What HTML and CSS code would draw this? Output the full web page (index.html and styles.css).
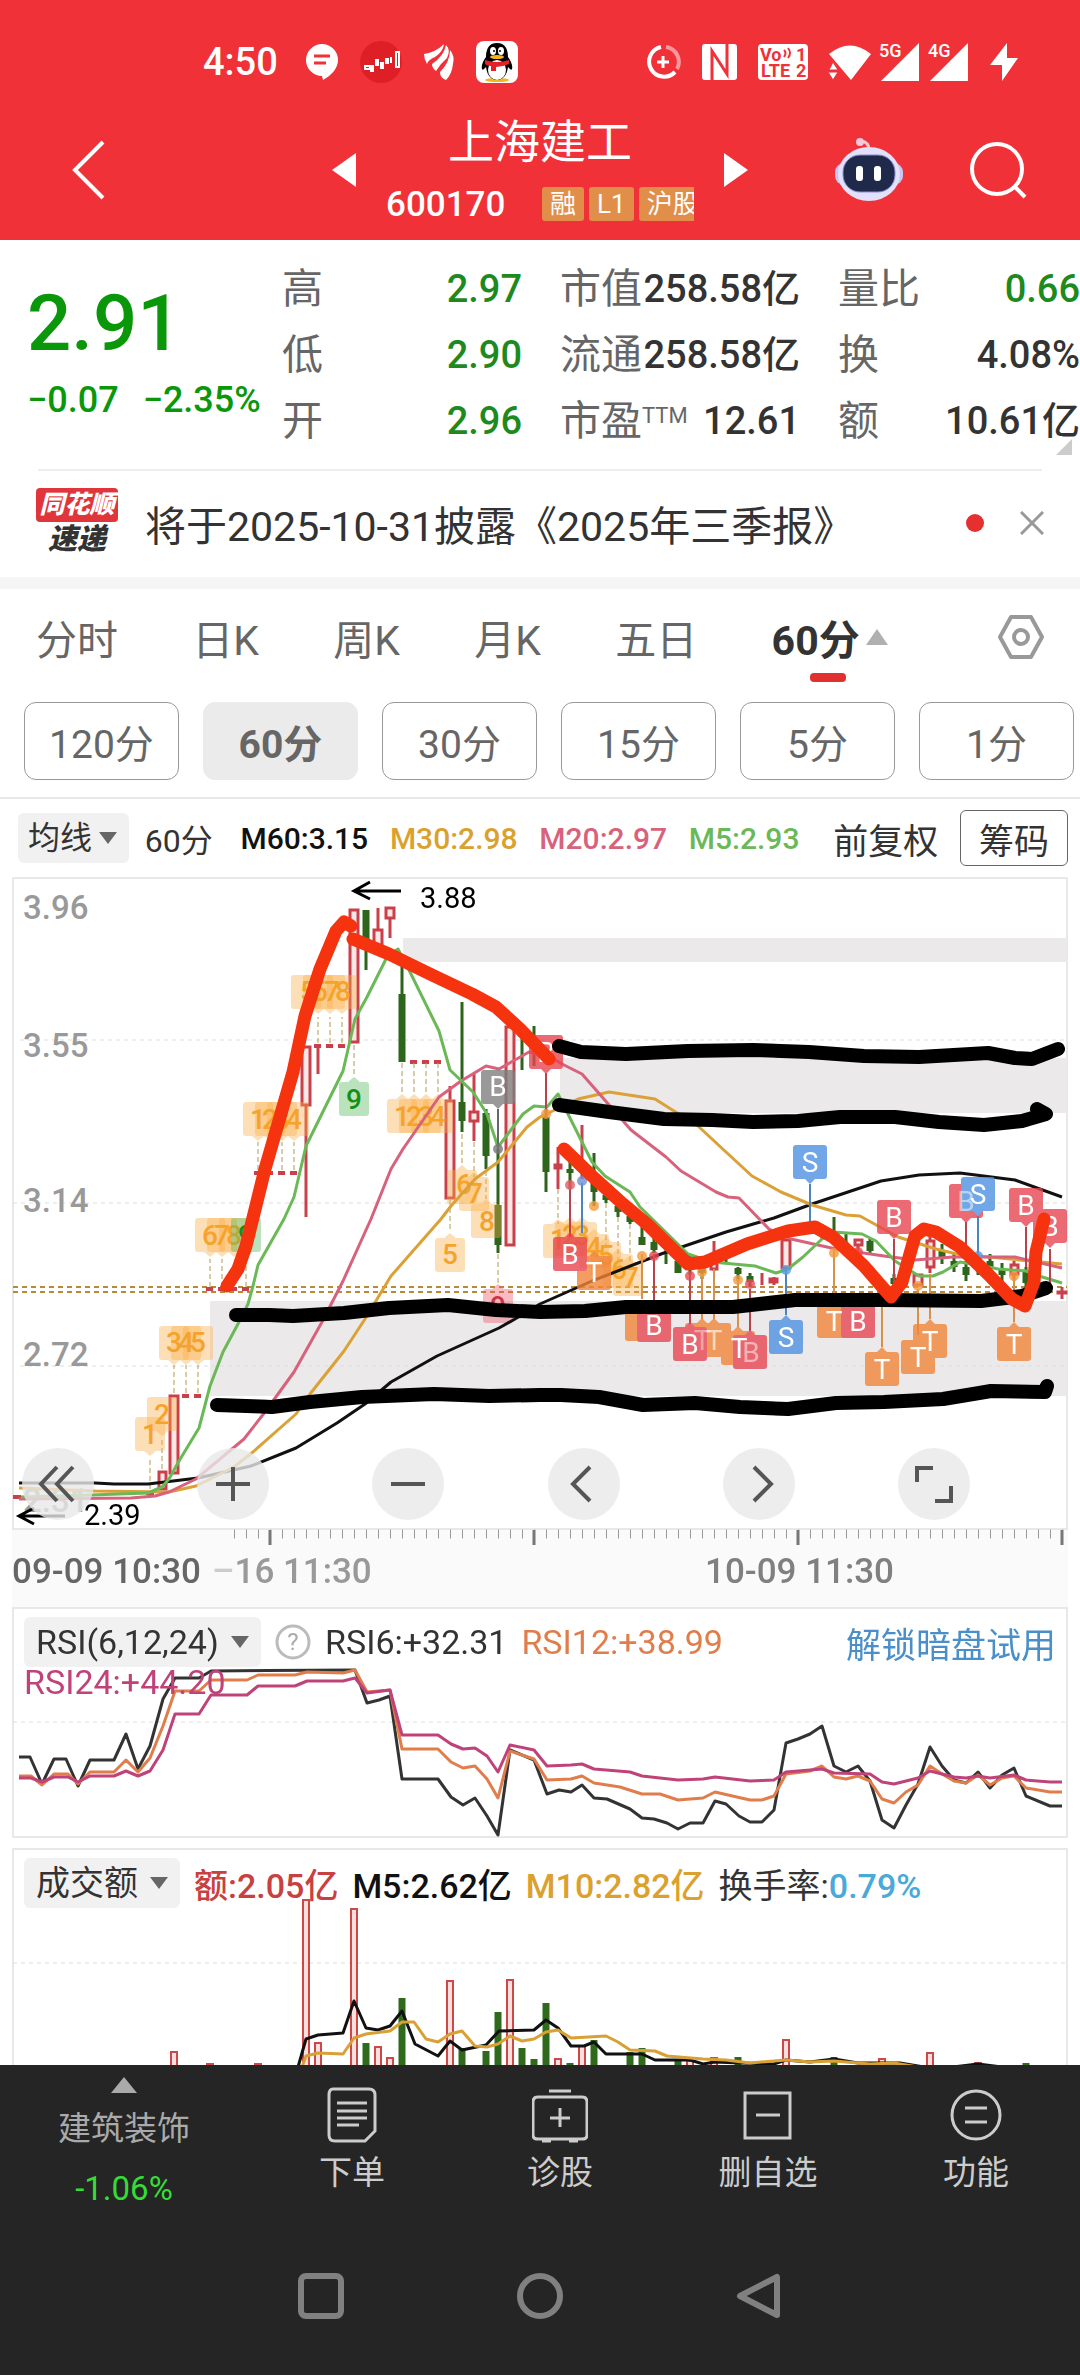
FILE: index.html
```
<!DOCTYPE html>
<html lang="zh-CN">

<head>
  <meta charset="UTF-8" />
  <meta name="viewport" content="width=device-width, initial-scale=1.0" />
  <title>上海建工 600170</title>
  <link rel="stylesheet" href="styles.css">
</head>

<body>
  <header class="top">
    <div class="status">
      <span class="clock">4:50</span>
      <svg width="32" height="36" viewBox="0 0 32 36"><path fill="#fff" d="M16 0a16 16 0 0 1 16 16c0 8-6 15-15 20l-1-4A16 16 0 0 1 16 0z"/><path stroke="#f03138" stroke-width="3" d="M8 12h16M8 19h12"/></svg>
      <svg width="42" height="42" viewBox="0 0 42 42"><circle cx="21" cy="21" r="21" fill="#de1f26"/><path fill="none" stroke="#fff" stroke-width="2" d="M5 28h5v-3h-5zM11 25h2v5h-2zM16 19h2v5h-2zM21 22h2v5h-2zM26 18h2v4h-2zM31 16v6M36 11h3v15h-3z"/></svg>
      <svg width="30" height="36" viewBox="0 0 30 36"><path fill="#fff" d="M0 10Q12 8 20 0 19 8 11 13 4 16 3 20 0 15 0 10zM8 20Q20 12 22 1 27 6 23 14 16 20 12 27 8 24 8 20zM16 28Q26 18 26 6 31 12 29 20 28 30 22 36 16 34 16 28z"/></svg>
      <svg width="42" height="42" viewBox="0 0 42 42"><rect width="42" height="42" rx="8" fill="#fff"/><ellipse cx="21" cy="39" rx="12" ry="2" fill="#f5b51b"/><path d="M21 2c-8 0-11 6-11 14-3 4-5 9-4 12 1 2 3-1 4-2 1 8 5 13 11 13s10-5 11-13c1 1 3 4 4 2 1-3-1-8-4-12C32 8 29 2 21 2z"/><ellipse cx="21" cy="29" rx="9" ry="10" fill="#fff"/><ellipse cx="17" cy="10" rx="3" ry="4" fill="#fff"/><ellipse cx="25" cy="10" rx="3" ry="4" fill="#fff"/><circle cx="18" cy="10" r="1"/><circle cx="24" cy="10" r="1"/><ellipse cx="21" cy="16" rx="7" ry="2" fill="#f5b51b"/><path fill="#e32228" d="M9 19q12 4 24 0v4q-7 3-13 3v4h-5v-5q-4 0-6-2z"/></svg>
      <div class="signals">
        <svg width="35" height="36" viewBox="0 0 35 36"><g fill="none" stroke="#fff" stroke-width="4"><path d="M15 3a15 15 0 1 0 14 25"/><path opacity=".5" d="M20 3a15 15 0 0 1 11 22"/><path stroke-width="3" d="M17 12v12M11 18h12"/></g></svg>
        <svg width="35" height="36" viewBox="0 0 35 36"><rect width="35" height="36" rx="3" fill="#fff"/><path fill="none" stroke="#f03138" stroke-width="3" d="M10 36V7l15 23V0"/></svg>
        <svg width="50" height="36" viewBox="0 0 50 36"><rect width="50" height="36" rx="4" fill="#fff"/><text class="volte" x="2" y="17">Vo</text><path fill="none" stroke="#f03138" stroke-width="2" d="M26 6q3 3 0 7M30 4q4 5 0 10"/><text class="volte" x="38" y="17">1</text><text class="volte" x="3" y="33">LTE</text><text class="volte" x="38" y="33">2</text></svg>
        <div class="bars">
          <svg width="42" height="36" viewBox="0 0 42 36"><path fill="#fff" d="M0 10Q21-7 42 10L22 36z"/><path fill="#fff" stroke="#f03138" d="M4 18l5 8H0zM4 36l-5-8h10z"/></svg>
          <svg width="41" height="38" viewBox="0 0 41 38"><path fill="#fff" d="M40 0v38H2z"/><text class="net" x="0" y="14">5G</text></svg>
          <svg width="41" height="38" viewBox="0 0 41 38"><path fill="#fff" d="M40 0v38H2z"/><text class="net" x="0" y="14">4G</text></svg>
        </div>
        <svg width="28" height="38" viewBox="0 0 28 38"><path fill="#fff" d="M17 0v15h11L12 38V22H0z"/></svg>
      </div>
    </div>
    <div class="titlebar">
      <button class="icon-btn back" aria-label="返回"><svg width="34" height="60" viewBox="0 0 34 60"><path fill="none" stroke="#fff" stroke-width="4" d="M31 2L3 30l28 28"/></svg></button>
      <div class="stock">
        <button class="icon-btn" aria-label="上一只"><svg width="24" height="34" viewBox="0 0 24 34"><path fill="#fff" d="M24 0v34L0 17z"/></svg></button>
        <div class="stock-name">
          <h1>上海建工</h1>
          <div class="code-row">
            <span class="code">600170</span>
            <span class="tags"><i>融</i><i>L1</i><i>沪股</i></span>
          </div>
        </div>
        <button class="icon-btn" aria-label="下一只"><svg width="24" height="34" viewBox="0 0 24 34"><path fill="#fff" d="M0 0v34l24-17z"/></svg></button>
      </div>
      <div class="tools">
        <button class="icon-btn" aria-label="助手"><svg width="68" height="64" viewBox="0 0 68 64"><path fill="none" stroke="#f7c9d6" stroke-width="3" d="M34 12q0-8-8-9"/><circle cx="25" cy="4" r="4" fill="#f7c9d6"/><rect x="0" y="25" width="68" height="22" rx="9" fill="#c9c4f5"/><ellipse cx="34" cy="36" rx="31" ry="27" fill="#e3e0fa"/><rect x="8" y="17" width="52" height="37" rx="17" fill="#1f2a4a" stroke="#8f8ad8" stroke-width="1"/><rect x="21" y="28" width="7" height="15" rx="3" fill="#fff"/><rect x="39" y="28" width="7" height="15" rx="3" fill="#fff"/></svg></button>
        <button class="icon-btn" aria-label="搜索"><svg width="58" height="58" viewBox="0 0 58 58"><g fill="none" stroke="#fff" stroke-width="4"><circle cx="28" cy="28" r="25"/><path d="M46 46l10 10"/></g></svg></button>
      </div>
    </div>
  </header>

  <section class="quote">
    <div class="price">
      <strong>2.91</strong>
      <p><span>−0.07</span><span>−2.35%</span></p>
    </div>
    <dl>
      <div><dt>高</dt><dd class="down">2.97</dd></div>
      <div><dt>低</dt><dd class="down">2.90</dd></div>
      <div><dt>开</dt><dd class="down">2.96</dd></div>
    </dl>
    <dl>
      <div><dt>市值</dt><dd>258.58亿</dd></div>
      <div><dt>流通</dt><dd>258.58亿</dd></div>
      <div><dt>市盈<sup>TTM</sup></dt><dd>12.61</dd></div>
    </dl>
    <dl>
      <div><dt>量比</dt><dd class="down">0.66</dd></div>
      <div><dt>换</dt><dd>4.08%</dd></div>
      <div><dt>额</dt><dd>10.61亿</dd></div>
    </dl>
    <span class="corner"></span>
  </section>

  <section class="news">
    <div class="news-logo"><b>同花顺</b><em>速递</em></div>
    <a href="#">将于2025-10-31披露《2025年三季报》</a>
    <span class="dot"></span>
    <button class="icon-btn" aria-label="关闭"><svg width="24" height="24" viewBox="0 0 24 24"><path stroke="#999" stroke-width="3" d="M1 1l22 22M23 1L1 23"/></svg></button>
  </section>

  <nav class="tabs">
    <button>分时</button>
    <button>日K</button>
    <button>周K</button>
    <button>月K</button>
    <button>五日</button>
    <button class="active">60分</button>
    <button class="setting" aria-label="设置"><svg width="46" height="44" viewBox="0 0 46 44"><g fill="none" stroke="#999" stroke-width="4"><path stroke-linejoin="round" d="M13 2h20l11 20-11 20H13L2 22z"/><circle cx="23" cy="22" r="7"/></g></svg></button>
  </nav>

  <div class="periods">
    <button>120分</button>
    <button class="active">60分</button>
    <button>30分</button>
    <button>15分</button>
    <button>5分</button>
    <button>1分</button>
  </div>

  <div class="legend ma">
    <span class="pick"><select aria-label="指标"><option>均线</option></select></span>
    <span class="cycle">60分</span>
    <span class="black">M60:3.15</span>
    <span class="gold">M30:2.98</span>
    <span class="pink">M20:2.97</span>
    <span class="green">M5:2.93</span>
    <button class="adjust">前复权</button>
    <button class="chips">筹码</button>
  </div>

  <section class="chart kline">
    <svg viewBox="12 878 1056 730" role="img" aria-label="60分K线">
      <defs>
        <path id="flag-down" d="M-14-17h28q3 0 3 3v28q0 3-3 3H5l-5 5-5-5h-9q-3 0-3-3v-28q0-3 3-3z"/>
        <path id="flag-up" d="M-14 17h28q3 0 3-3v-28q0-3-3-3H5l-5-5-5 5h-9q-3 0-3 3v28q0 3 3 3z"/>
        <path id="chip-down" d="M-12-17h24q3 0 3 3v28q0 3-3 3H6l-6 5-6-5h-6q-3 0-3-3v-28q0-3 3-3z"/>
        <path id="chip-up" d="M-12 17h24q3 0 3-3v-28q0-3-3-3H6l-6-5-6 5h-6q-3 0-3 3v28q0 3 3 3z"/>
      </defs>

      <rect class="frame" x="13" y="879" width="1054" height="651"/>
      <rect x="12" y="1531" width="1056" height="77" fill="#fafafa"/>

      <!-- pressure and support zones -->
      <path class="zone" d="M403 939h664v24H403zM560 1059h507v55H560zM210 1302h857v95H210z"/>
      <path class="grid" d="M20 1041h1046M13 1204h1054M20 1367h1046"/>
      <path class="last-price" d="M13 1288h1054M13 1293h1054"/>

      <g class="axis">
        <text x="23" y="920">3.96</text>
        <text x="23" y="1058">3.55</text>
        <text x="23" y="1213">3.14</text>
        <text x="23" y="1367">2.72</text>
        <text x="23" y="1513">2.31</text>
      </g>

      <!-- candles -->
      <g class="wick-down">
        <path d="M366 940v31M402 965v30M462 1003v130M486 1110v60M498 1150v104M522 1025v46M534 1027v40M546 1110v83M570 1160v30M594 1154v53M606 1190v14M618 1200v18M630 1210v15M642 1220v26M654 1238v16M666 1245v20M678 1250v24M690 1256v20M702 1260v20M726 1256v8M738 1268v14M750 1274v14M834 1218v20M846 1235v14M870 1240v14M894 1275v14M942 1245v20M954 1255v18M966 1262v20M978 1256v20M990 1255v18M1002 1264v20M1026 1268v26"/>
        <path class="body" d="M366 911v29M402 995v68M462 1103v19M486 1114v43M498 1206v40M546 1118v55M570 1170v4M594 1184v9M606 1196v5M618 1207v6M630 1217v6M642 1238v8M654 1243v8M678 1262v12M702 1268v6M738 1269v6M750 1277v6M870 1242v10M894 1279v6M942 1252v8M954 1262v6M966 1268v8M990 1262v8M1002 1270v6M1026 1272v12"/>
      </g>
      <g class="wick-up">
        <path d="M306 1106v112M318 1047v28M378 909v21M390 920v19M450 1087v15M474 1075v38M474 1122v20M558 1148v42M582 1126v54M714 1242v30M762 1274v12M774 1278v8M822 1225v15M846 1242v10M858 1240v20M906 1268v20M930 1236v38M1014 1262v20M1062 1288v12M882 1280v10"/>
        <path class="hollow" d="M159 1473h7v17h-7zM170 1397h8v77h-8zM302 1048h8v58h-8zM350 911h8v132h-8zM374 931h8v16h-8zM386 909h8v10h-8zM446 1102h8v97h-8zM470 1113h8v9h-8zM506 1028h8v218h-8zM555 1166h6v3h-6zM782 1241h8v28h-8zM711 1264h6v6h-6zM855 1241h7v5h-7zM927 1242h7v26h-7zM914 1276h8v10h-8zM1011 1266h7v9h-7zM1058 1293h8v1h-8zM770 1280h7v3h-7z"/>
        <path class="flat" d="M13 1498h8M146 1494h8M182 1397h7M194 1397h7M206 1290h7M218 1290h7M230 1290h7M242 1290h7M254 1174h7M266 1174h7M278 1174h7M290 1174h7M314 1047h7M326 1047h7M338 1047h7M410 1063h7M422 1063h7M434 1063h7"/>
      </g>
      <path class="leader" d="M150 1490v-30M162 1470v-32M174 1394v-28M186 1394v-28M198 1394v-28M210 1288v-28M222 1288v-28M246 1288v-28M258 1171v-28M282 1171v-28M294 1171v-28M318 1044v-26M330 1044v-26M342 1044v-26M354 1046v30M402 1064v30M414 1064v30M426 1064v30M438 1064v30M450 1201v32M462 1135v30M474 1143v35M486 1172v28M498 1255v32M558 1190v35M606 1204v50M618 1218v45M630 1225v45"/>

      <!-- nine-turn counts -->
      <g class="chip orange">
        <g><use href="#chip-down" x="150" y="1435"/><use href="#chip-down" x="162" y="1415"/><use href="#chip-down" x="174" y="1344"/><use href="#chip-down" x="186" y="1344"/><use href="#chip-down" x="198" y="1344"/><use href="#chip-down" x="210" y="1236"/><use href="#chip-down" x="222" y="1236"/><use href="#chip-down" x="234" y="1236"/><use href="#chip-down" x="258" y="1120"/><use href="#chip-down" x="270" y="1120"/><use href="#chip-down" x="282" y="1120"/><use href="#chip-down" x="294" y="1120"/><use href="#chip-down" x="306" y="993"/><use href="#chip-down" x="318" y="993"/><use href="#chip-down" x="330" y="993"/><use href="#chip-down" x="342" y="993"/></g>
        <g><use href="#chip-up" x="402" y="1117"/><use href="#chip-up" x="414" y="1117"/><use href="#chip-up" x="426" y="1117"/><use href="#chip-up" x="438" y="1117"/><use href="#chip-up" x="450" y="1256"/><use href="#chip-up" x="462" y="1188"/><use href="#chip-up" x="474" y="1195"/><use href="#chip-up" x="486" y="1222"/><use href="#chip-up" x="558" y="1242"/><use href="#chip-up" x="570" y="1240"/><use href="#chip-up" x="582" y="1240"/><use href="#chip-up" x="594" y="1252"/><use href="#chip-up" x="606" y="1260"/><use href="#chip-up" x="618" y="1272"/><use href="#chip-up" x="628" y="1280"/></g>
        <g><text x="150" y="1445">1</text><text x="162" y="1425">2</text><text x="174" y="1353">3</text><text x="186" y="1353">4</text><text x="198" y="1353">5</text><text x="210" y="1246">6</text><text x="222" y="1246">7</text><text x="234" y="1246">8</text><text x="258" y="1130">1</text><text x="270" y="1130">2</text><text x="282" y="1130">3</text><text x="294" y="1130">4</text><text x="308" y="1002">5</text><text x="320" y="1002">6</text><text x="332" y="1002">7</text><text x="343" y="1002">8</text><text x="402" y="1127">1</text><text x="414" y="1127">2</text><text x="426" y="1127">3</text><text x="438" y="1127">4</text><text x="450" y="1265">5</text><text x="464" y="1195">6</text><text x="475" y="1204">7</text><text x="487" y="1232">8</text><text x="558" y="1250">1</text><text x="570" y="1246">2</text><text x="582" y="1246">3</text><text x="594" y="1258">4</text><text x="606" y="1266">5</text><text x="619" y="1280">6</text><text x="631" y="1288">7</text></g>
      </g>
      <g class="chip lime"><use href="#chip-down" x="246" y="1236"/><use href="#chip-up" x="354" y="1100"/><text x="246" y="1246">9</text><text x="354" y="1110">9</text></g>
      <g class="chip rose"><use href="#chip-up" x="498" y="1307"/><text x="498" y="1317">9</text></g>

      <!-- moving averages -->
      <polyline class="line" stroke="#111" points="19,1484 95,1484 114,1485 148,1485 198,1479 251,1467 296,1449 337,1424 365,1405 391,1383 437,1357 499,1329 515,1320 540,1305 592,1282 661,1255 726,1233 774,1219 812,1205 881,1182 919,1176 960,1174 1015,1181 1062,1198"/>
      <polyline class="line" stroke="#dba136" points="19,1489 95,1492 169,1493 196,1487 234,1468 253,1453 296,1415 310,1395 344,1352 365,1320 391,1277 441,1220 451,1207 475,1180 498,1163 527,1128 540,1118 578,1100 609,1093 655,1100 674,1112 698,1127 726,1153 752,1177 781,1193 812,1206 846,1216 860,1217 898,1238 936,1250 957,1255 1062,1265"/>
      <polyline class="line" stroke="#d8627c" points="19,1500 131,1499 155,1497 169,1493 196,1480 244,1440 265,1413 294,1373 322,1323 343,1282 371,1220 391,1170 403,1150 439,1098 461,1082 486,1067 499,1070 529,1053 550,1058 564,1066 582,1075 631,1131 666,1158 681,1172 716,1193 728,1198 739,1199 769,1230 791,1240 836,1250 884,1257 915,1261 953,1258 1015,1258 1062,1269"/>
      <polyline class="line" stroke="#6bb857" points="21,1498 91,1496 148,1494 162,1488 169,1480 179,1462 199,1429 210,1387 223,1353 239,1323 248,1305 253,1287 258,1266 284,1220 294,1198 306,1147 343,1072 355,1020 367,998 387,958 398,950 410,973 439,1032 450,1071 473,1093 487,1115 498,1148 523,1115 534,1107 547,1108 558,1095 568,1115 592,1163 605,1177 630,1193 640,1208 688,1255 712,1263 755,1267 776,1274 788,1270 803,1258 822,1240 833,1233 862,1235 876,1242 895,1262 919,1277 933,1277 943,1273 960,1263 984,1267 998,1270 1026,1272 1039,1277 1062,1284"/>

      <!-- trade marks: B buy, S sell, T both -->
      <g class="stem">
        <path stroke="#666" d="M498 1110v40"/>
        <path stroke="#b8434f" d="M546 1074v44M570 1184v54M654 1255v50M690 1275v50M750 1290v42M894 1240v45M966 1223v30M1026 1228v40M1050 1250v40"/>
        <path stroke="#d9914a" d="M642 1255v45M702 1275v45M714 1270v50M738 1280v48M834 1250v50M882 1290v58M918 1290v46M930 1275v45M1014 1280v43"/>
        <path stroke="#4a85bb" d="M582 1184v50M786 1270v46M810 1185v45M978 1217v40"/>
      </g>
      <g class="knob"><circle fill="#777" cx="498" cy="1150" r="5"/><circle fill="#e35d66" cx="570" cy="1186" r="5"/><circle fill="#6e8fd6" cx="582" cy="1182" r="5"/><circle fill="#f59a3c" cx="594" cy="1207" r="5"/><circle fill="#f59a3c" cx="546" cy="1115" r="5"/><circle fill="#f59a3c" cx="642" cy="1257" r="5"/><circle fill="#e94a55" cx="654" cy="1257" r="5"/><circle fill="#e94a55" cx="690" cy="1277" r="5"/><circle fill="#f59a3c" cx="702" cy="1273" r="5"/><circle fill="#f59a3c" cx="738" cy="1281" r="5"/><circle fill="#e94a55" cx="750" cy="1285" r="5"/><circle fill="#5b9be0" cx="786" cy="1271" r="5"/><circle fill="#f59a3c" cx="834" cy="1254" r="5"/><circle fill="#e94a55" cx="858" cy="1253" r="5"/><circle fill="#5b9be0" cx="978" cy="1257" r="5"/><circle fill="#f59a3c" cx="918" cy="1287" r="5"/><circle fill="#f59a3c" cx="1014" cy="1277" r="5"/></g>
      <g class="flag">
        <g fill="#808080"><use href="#flag-down" x="498" y="1088"/></g>
        <g fill="#f0853a"><use href="#flag-up" x="594" y="1274"/><use href="#flag-up" x="642" y="1325"/><use href="#flag-up" x="702" y="1341"/><use href="#flag-up" x="714" y="1341"/><use href="#flag-up" x="738" y="1349"/><use href="#flag-up" x="834" y="1322"/><use href="#flag-up" x="882" y="1370"/><use href="#flag-up" x="930" y="1342"/><use href="#flag-up" x="918" y="1358"/><use href="#flag-up" x="1014" y="1345"/></g>
        <g fill="#e84550"><use href="#flag-down" x="546" y="1053"/><use href="#flag-up" x="570" y="1255"/><use href="#flag-up" x="654" y="1326"/><use href="#flag-up" x="690" y="1345"/><use href="#flag-up" x="750" y="1353"/><use href="#flag-up" x="858" y="1322"/><use href="#flag-down" x="894" y="1218"/><use href="#flag-down" x="966" y="1202"/><use href="#flag-down" x="1026" y="1206"/><use href="#flag-down" x="1050" y="1227"/></g>
        <g fill="#4e90e2"><use href="#flag-up" x="786" y="1338"/><use href="#flag-down" x="810" y="1163"/><use href="#flag-down" x="978" y="1195"/></g>
      </g>
      <g class="flag-text">
        <text x="498" y="1097">B</text><text x="546" y="1063">B</text><text x="570" y="1265">B</text><text x="594" y="1283">T</text><text x="654" y="1336">B</text><text x="690" y="1355">B</text><text x="702" y="1351" opacity=".4">T</text><text x="714" y="1351" opacity=".6">T</text><text x="739" y="1359">T</text><text x="751" y="1363" opacity=".5">B</text><text x="786" y="1348">S</text><text x="834" y="1332">T</text><text x="858" y="1332">B</text><text x="882" y="1380">T</text><text x="918" y="1368">T</text><text x="930" y="1352">T</text><text x="1014" y="1355">T</text><text x="894" y="1228">B</text><text x="966" y="1212" opacity=".5">B</text><text x="978" y="1205">S</text><text x="1026" y="1216">B</text><text x="1050" y="1237">B</text><text x="810" y="1173">S</text>
      </g>

      <!-- high and low -->
      <path class="arrow" d="M401 892h-46M370 883l-16 9 16 8M65 1517H19M34 1509l-15 8 15 8"/>
      <text class="extreme" x="420" y="909">3.88</text>
      <text class="extreme" x="84" y="1526">2.39</text>

      <!-- hand drawn notes -->
      <g class="pen black-pen">
        <path d="M559 1047L581 1053 626 1055 688 1052 753 1051 809 1053 864 1057 919 1058 988 1054 1015 1059 1032 1060 1058 1050"/>
        <path d="M559 1106L609 1113 664 1120 712 1121 753 1123 798 1122 840 1118 895 1118 939 1123 984 1126 1022 1122 1046 1115 1037 1110"/>
        <path d="M236 1316L269 1316 293 1317 344 1314 389 1309 448 1306 496 1311 540 1313 585 1312 626 1308 733 1308 795 1301 884 1301 981 1302 1022 1297 1046 1289"/>
        <path d="M217 1406L272 1408 310 1403 362 1398 434 1395 489 1397 540 1396 561 1396 599 1398 643 1406 695 1404 740 1408 788 1410 836 1404 884 1403 943 1400 991 1392 1045 1393 1047 1387"/>
      </g>
      <g class="pen red-pen">
        <path d="M227 1287L238 1270 246 1247 265 1170 293 1073 305 1017 320 970 336 932 344 923 351 927"/>
        <path d="M353 940L389 955 430 975 472 995 496 1008 520 1030 549 1060"/>
        <path d="M564 1150L592 1177 623 1205 647 1225 688 1265 705 1263 747 1245 788 1232 815 1228 833 1238 864 1267 891 1298 902 1283 915 1237 924 1230 936 1233 960 1248 988 1275 1012 1300 1025 1307 1034 1283 1036 1253 1044 1220"/>
      </g>

      <path class="ticks" d="M234 1535h830"/>
      <path class="ticks-major" d="M270 1531v15M534 1531v15M798 1531v15M1062 1531v15"/>
      <g class="dates">
        <text x="12" y="1584" fill="#666">09-09 10:30</text>
        <text x="212" y="1584" fill="#ccc">–<tspan fill="#999">16 11:30</tspan></text>
        <text x="705" y="1584">10-09 11:30</text>
      </g>
    </svg>
    <div class="chart-tools">
      <button aria-label="后退"><svg viewBox="0 0 72 72"><path d="M35 19L19 36l16 17M51 19L35 36l16 17"/></svg></button>
      <button aria-label="放大"><svg viewBox="0 0 72 72"><path d="M36 19v34M19 36h34"/></svg></button>
      <button aria-label="缩小"><svg viewBox="0 0 72 72"><path d="M19 36h34"/></svg></button>
      <button aria-label="左移"><svg viewBox="0 0 72 72"><path d="M42 19L25 36l17 17"/></svg></button>
      <button aria-label="右移"><svg viewBox="0 0 72 72"><path d="M31 19l17 17-17 17"/></svg></button>
      <button aria-label="全屏"><svg viewBox="0 0 72 72"><path d="M35 20H19v14M53 38v15H37"/></svg></button>
    </div>
  </section>

  <section class="chart">
    <svg viewBox="12 1608 1056 231" role="img" aria-label="RSI">
      <rect class="frame" x="13" y="1609" width="1054" height="229"/>
      <path class="grid" d="M13 1723h1054"/>
      <polyline class="line" stroke="#333" points="19,1758 30,1758 42,1785 54,1760 66,1760 78,1787 90,1761 114,1761 126,1735 138,1770 150,1747 163,1700 175,1679 199,1679 211,1672 355,1671 367,1704 379,1701 390,1697 402,1780 438,1780 451,1798 463,1806 475,1799 487,1817 498,1836 510,1751 534,1761 547,1795 559,1791 571,1793 582,1786 594,1799 607,1800 630,1810 642,1819 654,1820 667,1824 678,1830 690,1824 703,1824 715,1802 726,1805 739,1817 750,1823 762,1823 774,1811 786,1744 798,1740 810,1735 822,1727 834,1767 846,1773 858,1767 870,1782 882,1821 894,1829 906,1806 918,1785 930,1748 942,1767 954,1781 966,1784 978,1773 990,1789 1002,1776 1014,1769 1026,1797 1050,1807 1062,1807"/>
      <polyline class="line" stroke="#e07d4b" points="19,1777 31,1777 42,1786 54,1775 68,1775 78,1785 90,1773 114,1773 126,1761 138,1773 150,1759 163,1727 175,1692 199,1692 211,1681 247,1681 258,1676 295,1676 307,1673 343,1674 355,1671 367,1693 390,1691 402,1750 438,1750 451,1763 463,1769 475,1767 487,1780 498,1799 510,1752 534,1760 547,1781 571,1780 582,1777 594,1784 620,1788 642,1795 660,1795 678,1801 703,1799 715,1793 750,1801 762,1801 774,1797 786,1775 810,1772 822,1767 834,1778 846,1780 858,1777 870,1782 882,1800 894,1804 906,1793 918,1786 930,1767 942,1775 954,1782 966,1784 978,1776 990,1786 1002,1779 1014,1777 1026,1789 1050,1793 1062,1793"/>
      <polyline class="line" stroke="#bf4379" points="19,1779 31,1779 42,1783 54,1778 68,1778 78,1783 90,1777 114,1777 126,1772 138,1777 150,1772 163,1751 175,1715 199,1715 211,1696 247,1696 258,1687 295,1687 307,1682 343,1682 355,1679 367,1694 390,1691 402,1736 438,1736 451,1745 463,1750 475,1749 487,1757 498,1773 510,1746 534,1751 547,1767 571,1766 582,1765 594,1770 630,1773 642,1777 678,1781 703,1780 715,1778 750,1782 774,1781 786,1773 822,1770 834,1774 870,1775 882,1783 894,1785 918,1779 930,1772 954,1778 966,1779 978,1777 990,1779 1014,1776 1026,1781 1050,1783 1062,1783"/>
    </svg>
    <div class="indicator">
      <div class="legend">
        <span class="pick"><select aria-label="副图指标一"><option>RSI(6,12,24)</option></select></span>
        <svg class="help" width="36" height="36" viewBox="0 0 36 36"><circle cx="18" cy="18" r="16" fill="none" stroke="#bbb" stroke-width="3"/><text x="18" y="26">?</text></svg>
        <span>RSI6:+32.31</span>
        <span class="copper">RSI12:+38.99</span>
        <a class="unlock" href="#">解锁暗盘试用</a>
      </div>
      <p class="magenta">RSI24:+44.20</p>
    </div>
  </section>

  <section class="chart volume">
    <svg viewBox="12 1849 1056 217" role="img" aria-label="成交额">
      <path class="frame" d="M13 2068V1850h1054v218"/>
      <path class="grid" d="M13 1964h1054"/>
      <path class="bars-up" d="M171 2070v-17h6v17M207 2070v-5h6v5M255 2070v-5h6v5M303 2070v-169h6v169M315 2070v-26h6v26M351 2070v-160h6v160M375 2070v-22h6v22M387 2070v-11h6v11M447 2070v-88h6v88M507 2070v-89h6v89M555 2070v-10h6v10M579 2070v-23h6v23M687 2070v-8h6v8M711 2070v-11h6v11M783 2070v-29h6v29M879 2070v-10h6v10M927 2070v-16h6v16M975 2070v-6h6v6"/>
      <path class="bars-down" d="M366 2067v-23M402 2067v-68M462 2067v-18M486 2067v-15M498 2067v-54M522 2067v-18M534 2067v-7M546 2067v-63M570 2067v-3M594 2067v-26M630 2067v-14M642 2067v-18M678 2067v-7M738 2067v-9M834 2067v-9M1026 2067v-3"/>
      <polyline class="line" stroke="#111" points="298,2068 306,2040 318,2036 343,2034 354,2002 366,2029 378,2031 390,2027 402,2012 415,2045 438,2057 450,2042 462,2051 486,2046 499,2032 534,2031 546,2021 558,2029 571,2047 584,2047 594,2043 606,2055 642,2055 655,2061 690,2061 703,2065 715,2063 740,2064 774,2065 786,2061 810,2063 834,2060 858,2064 900,2064 936,2070 978,2065 1002,2068"/>
      <polyline class="line" stroke="#d9a035" points="302,2068 306,2057 318,2054 343,2055 354,2039 366,2035 390,2032 402,2023 414,2023 426,2040 438,2043 450,2035 462,2032 475,2047 487,2048 498,2045 510,2037 522,2042 534,2040 546,2033 558,2031 571,2039 606,2037 618,2043 630,2051 655,2052 667,2057 703,2060 726,2061 750,2064 786,2061 810,2063 834,2062 870,2065 894,2064 924,2069"/>
    </svg>
    <div class="indicator">
      <div class="legend">
        <span class="pick"><select aria-label="副图指标二"><option>成交额</option></select></span>
        <span class="crimson">额:2.05亿</span>
        <span class="black">M5:2.62亿</span>
        <span class="gold">M10:2.82亿</span>
        <span>换手率:<span class="sky">0.79%</span></span>
      </div>
    </div>
  </section>

  <footer>
    <div class="actions">
      <a href="#" class="sector"><i></i><span>建筑装饰</span><span class="chg">-1.06%</span></a>
      <a href="#"><svg width="56" height="56" viewBox="0 0 56 56"><path d="M9 2h36q6 0 6 6v36L41 54H11q-6 0-6-6V8q0-6 4-6zM13 16h30M13 24h30M13 31h30M13 38h22"/></svg>下单</a>
      <a href="#"><svg width="56" height="56" viewBox="0 0 56 56"><path d="M6 10h44q5 0 5 5v33q0 4-5 4H6q-5 0-5-4V15q0-5 5-5zM17 4h22M28 21v19M18 31h20M10 54h9M37 54h9"/></svg>诊股</a>
      <a href="#"><svg width="56" height="56" viewBox="0 0 56 56"><path d="M5 6h45v45H5zM16 28h24"/></svg>删自选</a>
      <a href="#"><svg width="56" height="56" viewBox="0 0 56 56"><circle cx="28" cy="28" r="24"/><path d="M17 21h22M17 35h22"/></svg>功能</a>
    </div>
    <div class="sysnav">
      <button class="icon-btn" aria-label="最近任务"><svg width="46" height="46" viewBox="0 0 46 46"><rect x="3" y="3" width="40" height="40" rx="5"/></svg></button>
      <button class="icon-btn" aria-label="主屏幕"><svg width="46" height="46" viewBox="0 0 46 46"><circle cx="23" cy="23" r="20"/></svg></button>
      <button class="icon-btn" aria-label="返回上级"><svg width="46" height="46" viewBox="0 0 46 46"><path d="M41 4v38L4 23z"/></svg></button>
    </div>
  </footer>
</body>

</html>
```
FILE: styles.css
```
* {
  box-sizing: border-box;
}

body {
  margin: 0;
  background: #fff;
  color: #333;
  font-family: Roboto, "Noto Sans CJK SC", sans-serif;
  font-size: 34px;
}

button,
select {
  margin: 0;
  padding: 0;
  border: 0;
  background: none;
  color: inherit;
  font: inherit;
  cursor: pointer;
}

a {
  color: inherit;
  text-decoration: none;
}

svg {
  display: block;
}

/* header */
.top {
  height: 240px;
  background: #f03138;
  color: #fff;
}

.status {
  display: flex;
  align-items: center;
  gap: 22px;
  height: 104px;
  padding: 20px 62px 0 203px;
}

.status svg {
  overflow: visible;
}

.clock {
  margin-right: 6px;
  font-size: 38px;
  font-weight: 500;
}

.signals {
  display: flex;
  align-items: center;
  gap: 21px;
  margin-left: auto;
}

.bars {
  display: flex;
  align-items: center;
  gap: 8px;
}

.volte {
  fill: #f03138;
  font-size: 18px;
  font-weight: 700;
}

.net {
  fill: #fff;
  font-size: 18px;
  font-weight: 500;
}

.titlebar {
  display: grid;
  grid-template-columns: 1fr auto 1fr;
  align-items: center;
  height: 132px;
}

.back {
  justify-self: start;
  margin-left: 72px;
}

.stock {
  display: flex;
  align-items: center;
  gap: 30px;
}

.stock-name {
  width: 308px;
}

.stock h1 {
  margin: 0;
  font-size: 46px;
  font-weight: 400;
  line-height: 68px;
  text-align: center;
}

.code-row {
  display: flex;
  align-items: center;
  justify-content: space-between;
  height: 56px;
}

.code {
  font-size: 35px;
  font-weight: 500;
}

.tags {
  display: flex;
  gap: 5px;
  width: 152px;
  overflow: hidden;
}

.tags i {
  flex: none;
  padding: 0 8px;
  border-radius: 3px;
  background: #e08e4a;
  font-size: 26px;
  font-style: normal;
  line-height: 34px;
}

.tools {
  display: flex;
  align-items: center;
  justify-content: flex-end;
  gap: 66px;
  padding-right: 53px;
}

/* quote */
.quote {
  position: relative;
  display: grid;
  grid-template-columns: minmax(0, 217fr) minmax(0, 240fr) minmax(0, 240fr) minmax(0, 242fr);
  column-gap: 38px;
  padding: 16px 0 15px 27px;
}

.price {
  padding-top: 20px;
  color: #0a970a;
  white-space: nowrap;
}

.price strong {
  display: block;
  font-size: 78px;
  font-weight: 500;
  line-height: 96px;
}

.price p {
  display: flex;
  gap: 24px;
  margin: 0;
  font-size: 36px;
  font-weight: 500;
  line-height: 56px;
}

.quote dl {
  margin: 0;
}

.quote dl div {
  display: flex;
  justify-content: space-between;
  height: 66px;
  line-height: 66px;
  white-space: nowrap;
}

.quote dt {
  color: #666;
  font-size: 41px;
}

.quote sup {
  font-size: 22px;
  line-height: 0;
  vertical-align: 12px;
}

.quote dd {
  margin: 0;
  font-size: 38px;
  font-weight: 500;
}

.quote .down {
  color: #1e8a1e;
}

.corner {
  position: absolute;
  right: 8px;
  bottom: 14px;
  border-left: 16px solid transparent;
  border-bottom: 16px solid #ccc;
}

/* news */
.news {
  display: flex;
  align-items: center;
  height: 120px;
  padding: 0 36px;
  border-bottom: 12px solid #f5f5f5;
  background: linear-gradient(#eee, #eee) center top / calc(100% - 76px) 2px no-repeat;
}

.news-logo {
  width: 82px;
  margin-right: 27px;
  font-size: 25px;
  line-height: 34px;
  text-align: center;
}

.news-logo b {
  display: block;
  border-radius: 4px;
  background: #e0353a;
  color: #fff;
  font-weight: 900;
  font-style: italic;
}

.news-logo em {
  font-size: 29px;
  font-weight: 900;
}

.news a {
  flex: 1;
  font-size: 41px;
  white-space: nowrap;
}

.dot {
  width: 18px;
  height: 18px;
  margin-right: 36px;
  border-radius: 50%;
  background: #e62f2f;
}

/* period tabs */
.tabs {
  display: flex;
  align-items: center;
  justify-content: space-between;
  height: 96px;
  padding: 0 36px;
  color: #666;
  font-size: 41px;
}

.tabs .active {
  position: relative;
  margin-right: 64px;
  color: #333;
  font-weight: 700;
}

.tabs .active::before {
  content: "";
  position: absolute;
  left: 38px;
  bottom: -15px;
  width: 36px;
  height: 9px;
  border-radius: 4px;
  background: #e0302f;
}

.tabs .active::after {
  content: "";
  position: absolute;
  left: 100%;
  top: 22px;
  margin-left: 6px;
  border: solid transparent;
  border-width: 0 11px 16px;
  border-bottom-color: #b0b0b0;
}

.periods {
  display: grid;
  grid-template-columns: repeat(6, 1fr);
  gap: 24px;
  padding: 17px 6px 17px 24px;
  border-bottom: 2px solid #e8e8e8;
  color: #666;
  font-size: 39px;
}

.periods button {
  height: 78px;
  border: 1px solid #999;
  border-radius: 12px;
}

.periods .active {
  border-color: #ebebeb;
  background: #ebebeb;
  font-weight: 700;
}

/* legends */
.legend {
  display: flex;
  align-items: center;
  white-space: nowrap;
}

.ma {
  justify-content: space-between;
  height: 78px;
  padding: 0 12px 0 18px;
  font-size: 30px;
}

.cycle {
  margin: 0 6px 0 -6px;
  font-size: 32px;
}

.pick {
  position: relative;
  border-radius: 6px;
  background: #f1f1f1;
}

.pick select {
  appearance: none;
  height: 50px;
  padding: 0 42px 0 12px;
  font-size: 34px;
}

.ma .pick select {
  padding: 0 36px 0 10px;
  font-size: 32px;
}

.pick::after {
  content: "";
  position: absolute;
  right: 12px;
  top: 19px;
  border: solid transparent;
  border-width: 12px 9px 0;
  border-top-color: #666;
  pointer-events: none;
}

.adjust {
  margin-left: 12px;
  font-size: 35px;
}

.chips {
  height: 56px;
  padding: 0 18px;
  border: 1px solid #666;
  border-radius: 6px;
  font-size: 35px;
}

.black { color: #111; font-weight: 500; }
.gold { color: #dba12e; font-weight: 500; }
.pink { color: #d8627c; font-weight: 500; }
.green { color: #6bb857; font-weight: 500; }
.copper { color: #e07d4b; }
.magenta { color: #bf4379; }
.crimson { color: #c8403f; font-weight: 500; }
.sky { color: #49a9d9; font-weight: 500; }

/* charts */
.chart {
  display: grid;
  margin: 0 12px 10px;
}

.chart > * {
  grid-area: 1 / 1;
  min-width: 0;
}

.chart > svg {
  width: 100%;
  height: auto;
}

.kline {
  margin-bottom: 0;
}

.frame {
  fill: none;
  stroke: #e8e8e8;
  stroke-width: 2;
}

.zone { fill: #ebe9ea; }

.grid {
  stroke: #ddd;
  stroke-width: 1;
  stroke-dasharray: 4 4;
}

.last-price {
  stroke: #b88a35;
  stroke-width: 2;
  stroke-dasharray: 5 4;
}

.axis {
  fill: #999;
  font-size: 33px;
  font-weight: 500;
}

.wick-down path {
  stroke: #2c651b;
  stroke-width: 3;
}

.wick-down .body { stroke-width: 7; }

.wick-up path {
  stroke: #c9404a;
  stroke-width: 3;
}

.wick-up .hollow { fill: #fbe6e6; }

.wick-up .flat { stroke-width: 4; }

.leader {
  stroke: #b09a50;
  stroke-dasharray: 5 3;
}

.line {
  fill: none;
  stroke-width: 3;
  stroke-linejoin: round;
}

.bars-up {
  fill: #fbe0e0;
  stroke: #cf4848;
  stroke-width: 2;
}

.bars-down {
  stroke: #2f6a1c;
  stroke-width: 7;
}

.chip {
  font-size: 28px;
  font-weight: 500;
  text-anchor: middle;
}

.chip use { opacity: .4; }
.orange use { fill: #fbb04a; }
.orange text { fill: #f5a32b; }
.lime use { fill: #4fb75a; }
.lime text { fill: #149017; }
.rose use { fill: #ee5566; }
.rose text { fill: #cc3344; }

.stem { stroke-width: 2; }
.knob { opacity: .8; }
.flag { opacity: .8; }
.flag-text {
  fill: #fff;
  font-size: 28px;
  text-anchor: middle;
}

.arrow {
  fill: none;
  stroke: #000;
  stroke-width: 3;
}

.extreme {
  fill: #000;
  font-size: 29px;
}

.pen {
  fill: none;
  stroke-linecap: round;
  stroke-linejoin: round;
}

.black-pen {
  stroke: #000;
  stroke-width: 14;
}

.red-pen {
  stroke: #f5330f;
  stroke-width: 13;
}

.ticks {
  stroke: #999;
  stroke-width: 9;
  stroke-dasharray: 1 11;
}

.ticks-major {
  stroke: #777;
  stroke-width: 3;
}

.dates {
  fill: #808080;
  font-size: 35px;
  font-weight: 500;
}

.chart-tools {
  display: flex;
  align-items: flex-end;
  justify-content: space-between;
  padding: 0 98px 87px 10px;
}

.chart-tools button {
  width: 72px;
  height: 72px;
  border-radius: 50%;
  background: rgba(233, 233, 233, .8);
}

.chart-tools path {
  fill: none;
  stroke: #555;
  stroke-width: 4;
}

.indicator {
  padding: 11px 12px 0;
}

.indicator .legend {
  height: 48px;
  gap: 14px;
}

.indicator p {
  margin: 0;
  line-height: 32px;
}

.help text {
  fill: #aaa;
  font-size: 24px;
  text-anchor: middle;
}

.unlock {
  margin-left: auto;
  color: #4a8fca;
  font-size: 35px;
}

.volume {
  margin-bottom: 0;
}

/* footer */
footer {
  min-height: 310px;
  background: #252525;
  color: #ccc;
}

.actions {
  display: grid;
  grid-template-columns: 248fr 208fr 208fr 208fr 208fr;
}

.actions a {
  display: flex;
  flex-direction: column;
  align-items: center;
  padding-top: 22px;
  font-size: 33px;
  line-height: 56px;
}

.actions svg {
  margin-bottom: 2px;
  fill: none;
  stroke: #ccc;
  stroke-width: 3;
}

.actions .sector {
  padding-top: 12px;
  color: #aaa;
  line-height: 60px;
}

.sector i {
  margin-bottom: 6px;
  border: solid transparent;
  border-width: 0 13px 16px;
  border-bottom-color: #aaa;
}

.actions .chg {
  color: #35dc35;
}

.sysnav {
  display: flex;
  justify-content: center;
  gap: 173px;
  padding-top: 54px;
}

.sysnav svg {
  fill: none;
  stroke: #808080;
  stroke-width: 6;
  stroke-linejoin: round;
}
```
